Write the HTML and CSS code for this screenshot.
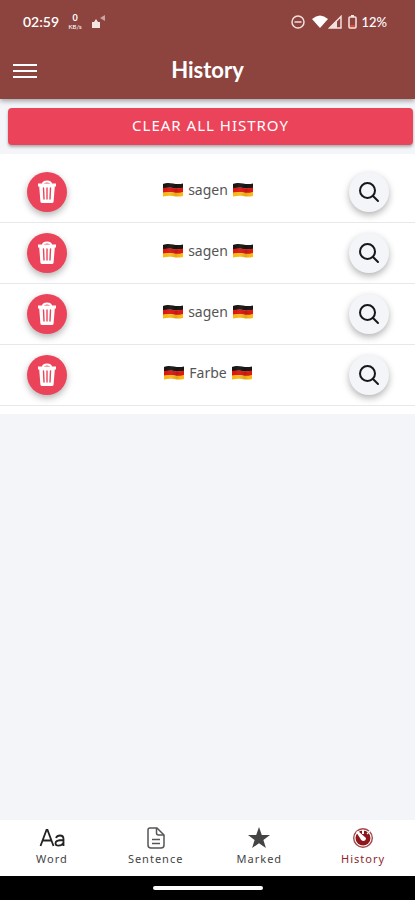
FILE: index.html
```html
<!DOCTYPE html>
<html lang="en">
<head>
<meta charset="utf-8">
<meta name="viewport" content="width=device-width, initial-scale=1">
<title>History</title>
<link rel="stylesheet" href="styles.css">
</head>
<body>
<svg class="defs" aria-hidden="true">
  <defs>
    <linearGradient id="shade" x1="0" x2="1"><stop offset="0" stop-color="#000" stop-opacity="0"/><stop offset=".3" stop-color="#fff" stop-opacity=".05"/><stop offset=".65" stop-color="#000" stop-opacity=".1"/><stop offset="1" stop-color="#fff" stop-opacity="0"/></linearGradient>
    <symbol id="flag" viewBox="0 0 20 16">
      <path fill="#181412" d="M0 2C4 .5 7 1 10 1.500S16 2.500 20 1.500V6C16 7 13 6.500 10 6S4 5.500 0 6.500Z"/>
      <path fill="#dc1710" d="M0 6C4 5 7 5.500 10 6S16 6.500 20 5.500V10.500C16 11.500 13 11 10 10.500S4 10 0 11Z"/>
      <path fill="#fbb914" d="M0 10.500C4 9.500 7 10 10 10.500S16 11 20 10V14C16 15 13 14.500 10 14S4 13.500 0 14.500Z"/>
      <path fill="url(#shade)" d="M0 2C4 .5 7 1 10 1.500S16 2.500 20 1.500V14C16 15 13 14.500 10 14S4 13.500 0 14.500Z"/>
    </symbol>
    <symbol id="trash" viewBox="0 0 20 24">
      <path fill="none" stroke="#fff" stroke-width="2" d="M6 4C6 .5 14 .5 14 4"/>
      <path fill="#fff" d="M1 3.500h18v3h-1.200L16.600 21.500q-.2 1.500-1.600 1.500H5q-1.400 0-1.600-1.500L2.200 6.500H1Z"/>
      <path stroke="#eb445a" stroke-width="1.400" stroke-linecap="round" d="M6.500 8l.5 11M10 8v11M13.500 8L13 19"/>
    </symbol>
    <symbol id="search" viewBox="0 0 22 22">
      <g fill="none" stroke="#15171a" stroke-width="2" stroke-linecap="round"><circle cx="9.500" cy="9.500" r="7.500"/><path d="M15 15l5 5"/></g>
    </symbol>
  </defs>
</svg>
<div class="app">
  <div class="status">
    <div class="status-group">
      <span class="time">02:59</span>
      <span class="rate"><b>0</b><small>KB/s</small></span>
      <svg width="15" height="16" viewBox="0 0 15 16" aria-hidden="true"><path fill="#f5e5e1" d="M1 8h2l2-3 2 3h2v6H1Z"/><path fill="#cda5a0" d="M9 4l5-3v6Z"/></svg>
    </div>
    <div class="status-group status-right">
      <svg width="14" height="14" viewBox="0 0 14 14" aria-hidden="true"><g fill="none" stroke="#f3dfdc" stroke-width="1.500"><circle cx="7" cy="7" r="6"/><path d="M3.500 7h7"/></g></svg>
      <svg class="wifi" width="16" height="14" viewBox="0 0 16 14" aria-hidden="true"><path fill="#fff" d="M0 4Q8-3 16 4L8 13Z"/></svg>
      <svg width="14" height="14" viewBox="0 0 14 14" aria-hidden="true"><path fill="none" stroke="#f3dfdc" stroke-width="1.500" d="M1.500 13H13V1.500Z"/><path fill="#f3dfdc" d="M1 13L9 5v8Z"/></svg>
      <svg class="battery" width="9" height="14" viewBox="0 0 9 14" aria-hidden="true"><path fill="#f8e6e3" d="M3 0h3v2H3Z"/><rect x="1" y="2" width="7" height="11" rx="1" fill="none" stroke="#f8e6e3" stroke-width="1.500"/><path fill="#e84434" d="M2 10h5v2H2Z"/></svg>
      <span>12%</span>
    </div>
  </div>
  <header class="header">
    <button class="menu" aria-label="Menu"><svg width="24" height="16" viewBox="0 0 24 16"><path stroke="#fff" stroke-width="2" d="M0 2h24M0 8h24M0 14h24"/></svg></button>
    <h1>History</h1>
  </header>
  <main>
    <button class="clear">CLEAR ALL HISTROY</button>
    <ul class="list">
      <li><button class="round delete" aria-label="Delete"><svg width="20" height="24"><use href="#trash"/></svg></button><span class="term"><svg width="20" height="16"><use href="#flag"/></svg>sagen<svg width="20" height="16"><use href="#flag"/></svg></span><button class="round find" aria-label="Search"><svg width="22" height="22"><use href="#search"/></svg></button></li>
      <li><button class="round delete" aria-label="Delete"><svg width="20" height="24"><use href="#trash"/></svg></button><span class="term"><svg width="20" height="16"><use href="#flag"/></svg>sagen<svg width="20" height="16"><use href="#flag"/></svg></span><button class="round find" aria-label="Search"><svg width="22" height="22"><use href="#search"/></svg></button></li>
      <li><button class="round delete" aria-label="Delete"><svg width="20" height="24"><use href="#trash"/></svg></button><span class="term"><svg width="20" height="16"><use href="#flag"/></svg>sagen<svg width="20" height="16"><use href="#flag"/></svg></span><button class="round find" aria-label="Search"><svg width="22" height="22"><use href="#search"/></svg></button></li>
      <li><button class="round delete" aria-label="Delete"><svg width="20" height="24"><use href="#trash"/></svg></button><span class="term"><svg width="20" height="16"><use href="#flag"/></svg>Farbe<svg width="20" height="16"><use href="#flag"/></svg></span><button class="round find" aria-label="Search"><svg width="22" height="22"><use href="#search"/></svg></button></li>
    </ul>
  </main>
  <nav class="tabs">
    <a href="#word"><svg width="26" height="24" viewBox="0 0 26 24" aria-hidden="true"><g fill="none" stroke="#222" stroke-width="1.800"><path d="M1.500 19L7.500 3h1l6 16M3.600 13.500h8.800"/><path d="M17 11q1-2.500 4-2.500 3.500 0 3.500 3.500v7M24.500 13q-8 0-8 3.200 0 2.400 3 2.400 3.500 0 5-3"/></g></svg><span>Word</span></a>
    <a href="#sentence"><svg width="24" height="24" viewBox="0 0 24 24" aria-hidden="true"><g fill="none" stroke="#555" stroke-width="1.500" stroke-linejoin="round"><path d="M6 1h7l7 7v10q0 3-3 3H7q-3 0-3-3V3q0-2 2-2Z"/><path d="M12.500 1v5q0 2 2 2H20M8 12.500h8M8 16.500h8"/></g></svg><span>Sentence</span></a>
    <a href="#marked"><svg width="24" height="24" viewBox="0 0 24 24" aria-hidden="true"><path fill="#444" d="M12 0l2.800 8H23l-6.600 5 2.500 8L12 16.200 5.100 21l2.500-8L1 8h8.200Z"/></svg><span>Marked</span></a>
    <a href="#history" class="active" aria-current="page"><svg width="24" height="24" viewBox="0 0 24 24" aria-hidden="true"><circle cx="12" cy="11" r="9.300" fill="none" stroke="#a34a4d" stroke-width="1.400"/><circle cx="12" cy="11" r="7.500" fill="#8d171d"/><path fill="#fff" d="M11 3h2v4h-2ZM5 5l2-1 8 7q0 3-3 3-2 0-3-3Z"/><path stroke="#fff" stroke-width="1.300" d="M16 7l3-3"/></svg><span>History</span></a>
  </nav>
  <div class="system"><div class="handle"></div></div>
</div>
</body>
</html>
```
FILE: styles.css
```css
* { box-sizing: border-box; }
body { margin: 0; font-family: "Noto Sans", sans-serif; color: #555; }
button { font: inherit; border: 0; padding: 0; cursor: pointer; }
svg { display: block; flex: none; }
.defs { position: absolute; width: 0; height: 0; }
.app { min-height: 100vh; display: flex; flex-direction: column; background: #f3f5f9; }
.status { height: 43px; padding: 0 28px 0 23px; display: flex; align-items: center; justify-content: space-between; background: #8d443f; color: #fff; font: 500 13px/16px Lato, sans-serif; z-index: 2; }
.status-group { display: flex; align-items: center; gap: 8px; }
.time { font-size: 14px; font-weight: 600; }
.rate { display: flex; flex-direction: column; align-items: center; width: 16px; }
.rate b { font-size: 9px; line-height: 11px; }
.rate small { font-size: 6px; line-height: 8px; }
.status-right { gap: 4px; }
.wifi { margin-left: 3px; }
.status-right .wifi + svg { margin-left: -4px; }
.battery { margin-left: 2px; }
.header { height: 56px; padding: 0 13px; display: grid; grid-template-columns: 1fr auto 1fr; align-items: center; background: #8d443f; color: #fff; box-shadow: 0 2px 5px rgba(0, 0, 0, .35); z-index: 1; }
.menu { justify-self: start; background: none; }
h1 { margin: 0; font: 700 22px/32px Lato, sans-serif; padding-bottom: 2px; }
main { flex: 1; }
.clear { display: block; width: calc(100% - 10px); height: 37px; margin: 9px 2px 9px 8px; border-radius: 4px; background: #eb445a; color: #fff; font: 400 15px/20px "Noto Sans", sans-serif; letter-spacing: 1px; padding-bottom: 4px; box-shadow: 0 2px 3px rgba(0, 0, 0, .3); }
.list { list-style: none; margin: 0; padding: 8px 0; background: #fff; }
.list li { height: 61px; padding: 0 26px 0 27px; display: flex; align-items: center; justify-content: space-between; border-bottom: 1px solid #e7e8ea; }
.term { display: flex; align-items: center; gap: 5px; font: 400 14px/20px "Noto Sans", sans-serif; padding-bottom: 4px; }
.round { width: 40px; height: 40px; border-radius: 50%; display: grid; place-items: center; box-shadow: 0 3px 7px rgba(0, 0, 0, .3); }
.delete { background: #eb445a; }
.find { background: #f4f5f8; }
.tabs { height: 56px; display: grid; grid-template-columns: repeat(4, 1fr); background: #fff; }
.tabs a { display: flex; flex-direction: column; align-items: center; justify-content: center; padding-bottom: 2px; color: #444; text-decoration: none; font: 400 11px/16px "Noto Sans", sans-serif; letter-spacing: 1px; }
.tabs .active { color: #8d292d; }
.system { height: 24px; display: flex; align-items: center; justify-content: center; background: #000; }
.handle { width: 110px; height: 4px; border-radius: 2px; background: #fff; }
```
